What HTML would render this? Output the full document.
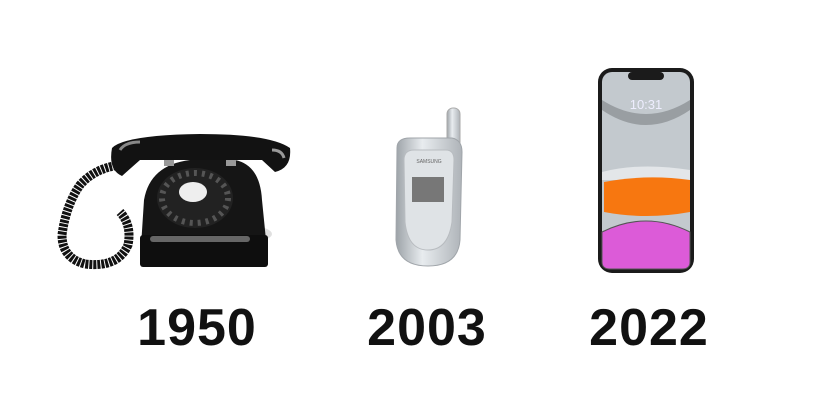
<!DOCTYPE html>
<html><head><style>
html,body{margin:0;padding:0;background:#fff;width:821px;height:411px;overflow:hidden}
.y{position:absolute;top:298px;font:bold 52px "Liberation Sans",sans-serif;color:#111;letter-spacing:1px;width:200px;text-align:center}
</style></head><body>
<svg width="821" height="411" style="position:absolute;left:0;top:0">
<defs>
<linearGradient id="sv" x1="0" x2="1"><stop offset="0" stop-color="#9da3a8"/><stop offset=".4" stop-color="#e8ecef"/><stop offset="1" stop-color="#aeb3b8"/></linearGradient>
</defs>
<ellipse cx="250" cy="234" rx="22" ry="8" fill="#ccc" opacity=".6"/>
<path d="M120 165 Q95 168 80 185 Q66 205 62 235 Q62 258 85 264 Q118 268 128 245 Q132 225 120 212" stroke="#111" stroke-width="9" fill="none" stroke-dasharray="3 1"/>
<path d="M144 200 Q150 165 190 160 L235 160 Q260 165 262 200 L268 260 L140 262 Z" fill="#151515"/>
<rect x="140" y="235" width="128" height="32" rx="3" fill="#0e0e0e"/>
<rect x="150" y="236" width="100" height="6" rx="3" fill="#666"/>
<ellipse cx="195" cy="198" rx="38" ry="30" fill="#222"/>
<ellipse cx="195" cy="198" rx="33" ry="25" fill="none" stroke="#555" stroke-width="6" stroke-dasharray="3 5"/>
<ellipse cx="193" cy="192" rx="14" ry="10" fill="#eee"/>
<rect x="164" y="144" width="10" height="22" fill="#999"/><rect x="226" y="144" width="10" height="22" fill="#999"/>
<path d="M112 148 Q125 135 200 134 Q270 134 290 148 Q292 168 275 172 L262 160 L140 160 L122 176 Q108 170 112 148 Z" fill="#121212"/>
<path d="M120 150 Q125 142 140 142" stroke="#888" stroke-width="3" fill="none"/>
<path d="M272 150 Q282 150 284 158" stroke="#999" stroke-width="3" fill="none"/>
<rect x="447" y="108" width="13" height="40" rx="6" fill="url(#sv)" stroke="#aaa"/>
<path d="M397 148 Q397 138 410 138 L452 138 Q462 140 462 152 L460 240 Q458 266 428 266 Q398 266 396 240 Z" fill="url(#sv)" stroke="#a0a5aa"/>
<path d="M404 160 Q404 150 414 150 L446 150 Q454 150 454 160 L452 222 Q448 250 428 250 Q408 250 405 222 Z" fill="#dfe3e6" stroke="#b8bcc0"/>
<rect x="412" y="177" width="32" height="25" fill="#777"/>
<text x="429" y="163" font-family="Liberation Sans" font-size="5" fill="#666" text-anchor="middle">SAMSUNG</text>
<rect x="598" y="68" width="96" height="205" rx="14" fill="#1b1b1b"/>
<rect x="602" y="72" width="88" height="197" rx="10" fill="#c3c9ce"/>
<path d="M602 110 Q646 140 690 110 L690 100 Q646 128 602 100 Z" fill="#999ea2"/>
<path d="M602 172 Q640 162 690 170 L690 180 L602 180 Z" fill="#e3e6e9"/>
<path d="M604 182 Q646 174 690 180 L690 212 Q646 220 604 212 Z" fill="#f77710"/>
<path d="M602 232 Q646 210 690 232 L690 262 Q690 269 682 269 L610 269 Q602 269 602 262 Z" fill="#dc5bd8" stroke="#555" stroke-width="1"/>
<rect x="628" y="72" width="36" height="8" rx="4" fill="#1b1b1b"/>
<text x="646" y="109" font-family="Liberation Sans" font-size="13" fill="#eef" text-anchor="middle">10:31</text>
</svg>
<div class="y" style="left:97px">1950</div>
<div class="y" style="left:327px">2003</div>
<div class="y" style="left:549px">2022</div>
</body></html>
